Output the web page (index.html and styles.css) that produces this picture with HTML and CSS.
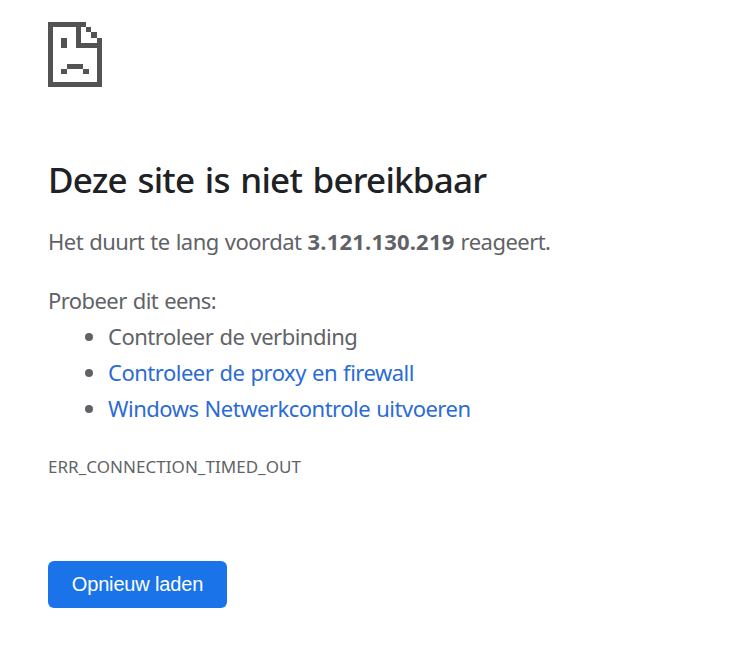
FILE: index.html
```html
<!DOCTYPE html>
<html lang="nl">
<head>
<meta charset="utf-8">
<title>Deze site is niet bereikbaar</title>
<link rel="stylesheet" href="styles.css">
</head>
<body>
<main>
<svg class="icon" width="54" height="65" viewBox="0 0 54 65" fill="#535353" shape-rendering="crispEdges">
<path d="M0 0H38V5H33V21H49V16H54V65H0ZM5 5V60H49V26H28V5Z" fill-rule="evenodd"/>
<path d="M38 5H43V10H38ZM43 10H49V16H43ZM13 16H19V26H13ZM19 42H35V47H19ZM13 47H19V52H13ZM35 47H41V52H35Z"/>
</svg>
<h1>Deze site is niet bereikbaar</h1>
<p class="summary">Het duurt te lang voordat <strong>3.121.130.219</strong> reageert.</p>
<p class="try">Probeer dit eens:</p>
<ul>
<li>Controleer de verbinding</li>
<li><a href="#">Controleer de proxy en firewall</a></li>
<li><a href="#">Windows Netwerkcontrole uitvoeren</a></li>
</ul>
<div class="code">ERR_CONNECTION_TIMED_OUT</div>
<button>Opnieuw laden</button>
</main>
</body>
</html>
```
FILE: styles.css
```css
body{margin:0;background:#fff;color:#5f6368;font-family:"Noto Sans","Open Sans",sans-serif;font-size:22px;line-height:36px;letter-spacing:-.5px;word-spacing:.9px}
main{padding:22px 0 0 48px;white-space:nowrap}
.icon{display:block}
h1{margin:69px 0 0;font-size:35px;line-height:48px;font-weight:500;color:#202124;letter-spacing:-.8px;word-spacing:2.3px}
p{margin:0}
.summary{margin-top:19px;letter-spacing:-.53px}
.summary strong{letter-spacing:.2px}
.try{margin-top:23px;letter-spacing:-.58px}
ul{margin:0;padding:0 0 0 60px}
a{color:#2b6bd6;text-decoration:none}
.code{margin-top:23px;font-size:17px;line-height:36px;letter-spacing:.04px}
button{display:block;margin-top:76px;width:179px;height:47px;border:0;border-radius:6px;background:#1a73e8;color:#fff;font:20px "Liberation Sans",sans-serif;letter-spacing:-.15px;word-spacing:0;padding:0}
```
